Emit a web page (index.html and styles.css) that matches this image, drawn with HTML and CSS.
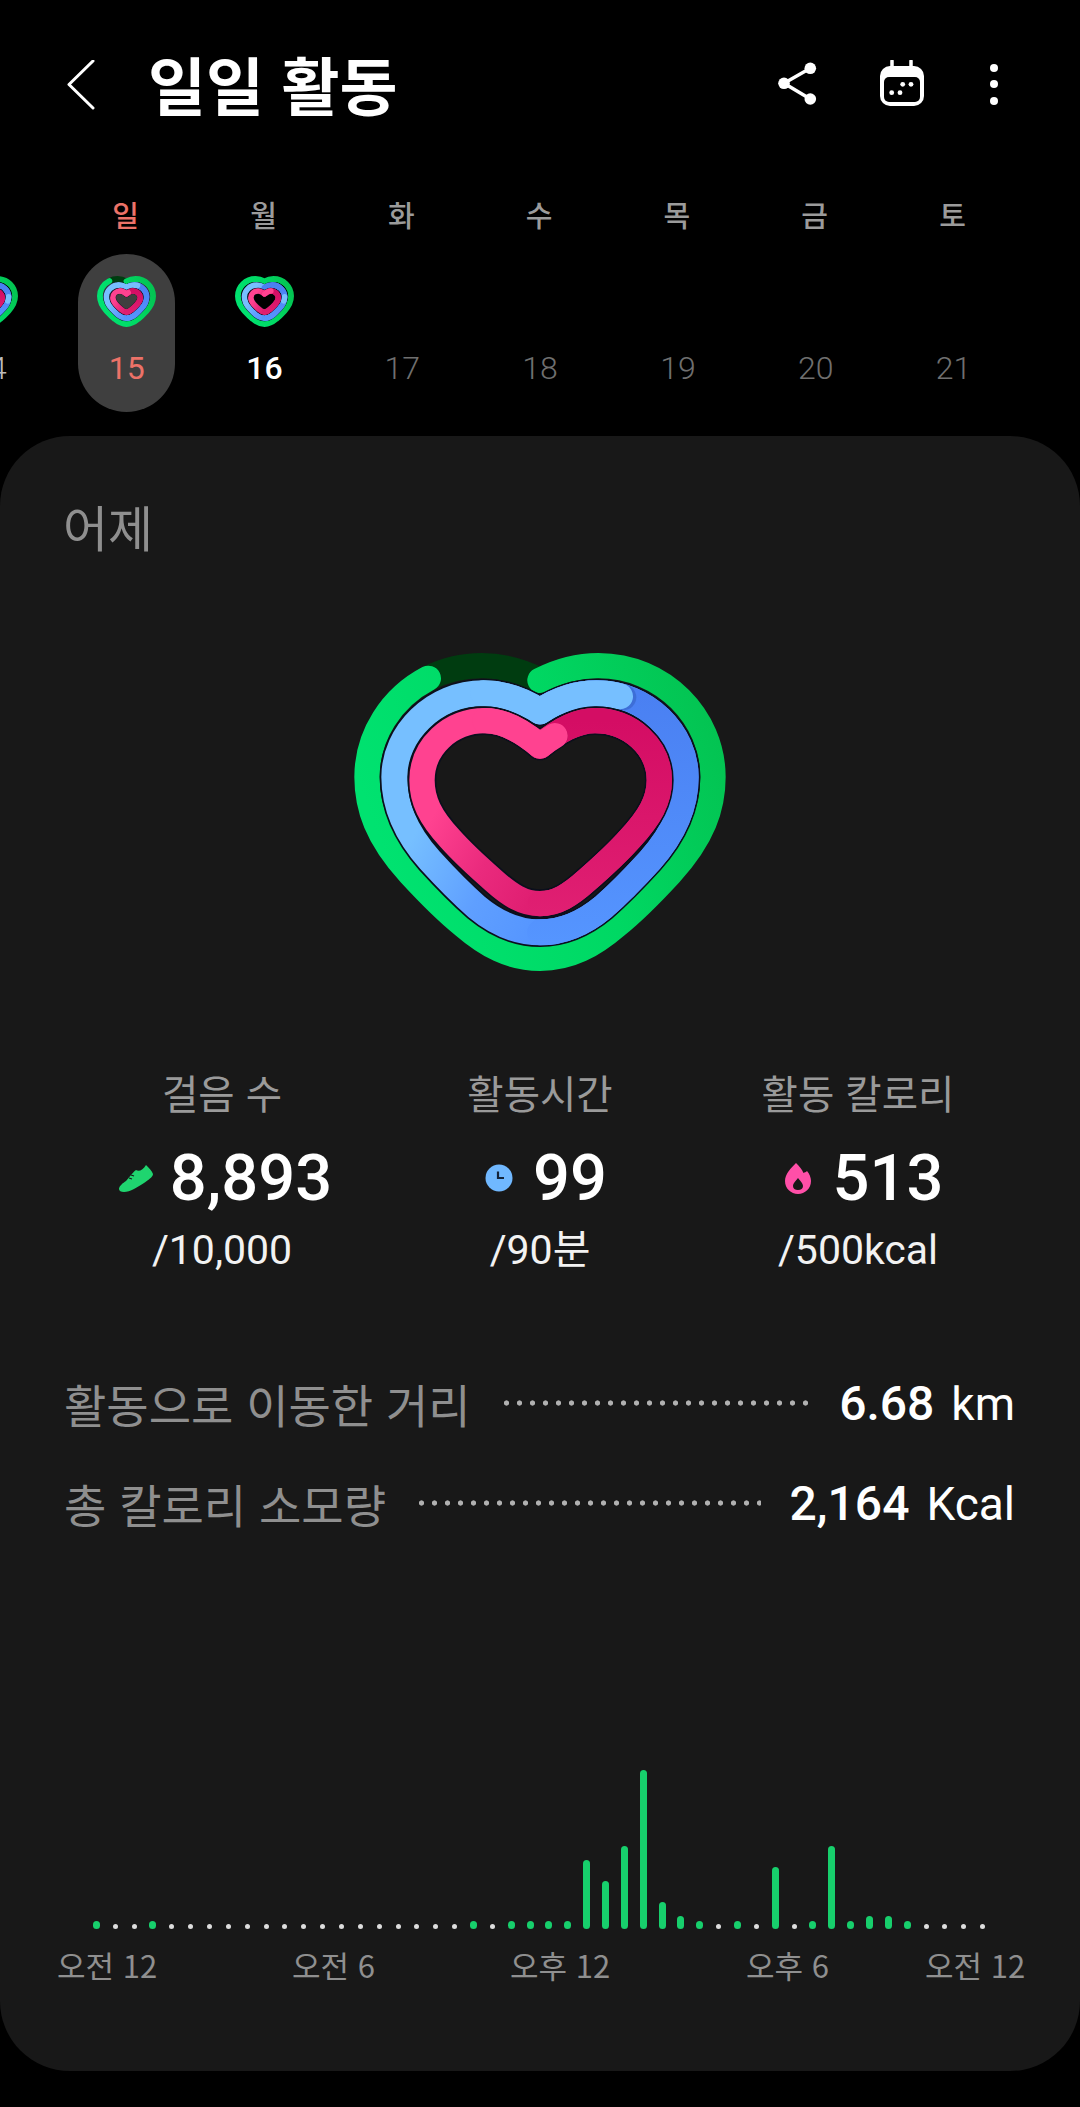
FILE: index.html
```html
<!DOCTYPE html>
<html lang="ko">
<head>
  <meta charset="UTF-8" />
  <meta name="viewport" content="width=device-width, initial-scale=1.0"/>
  <title>일일 활동</title>
  <link rel="stylesheet" href="styles.css">
</head>
<body>
  <header class="topbar">
    <svg class="back" viewBox="0 0 30 50"><path d="M27 1 3 24.500 27 48"/></svg>
    <h1>일일 활동</h1>
    <div class="actions">
      <svg class="share" viewBox="0 0 40 50">
        <path d="M33.300 8.300 7 23.300 33.300 39"/>
        <circle cx="33.300" cy="8.300" r="5.800"/><circle cx="7" cy="23.300" r="5.800"/><circle cx="33.300" cy="39" r="5.800"/>
      </svg>
      <svg class="cal" viewBox="0 0 48 50">
        <path class="cal-stub" d="M14 1v7M33 1v7"/>
        <rect x="2" y="6" width="44" height="40" rx="10" fill="#fff"/>
        <rect x="6" y="17" width="36" height="25" rx="5" fill="#000"/>
        <circle cx="24.700" cy="24.300" r="2.400"/><circle cx="33" cy="24.300" r="2.400"/>
        <circle cx="13.700" cy="32.700" r="2.400"/><circle cx="22" cy="32.700" r="2.400"/>
      </svg>
      <svg class="more" viewBox="0 0 12 50">
        <circle cx="6" cy="8" r="4"/><circle cx="6" cy="24" r="4"/><circle cx="6" cy="41" r="4"/>
      </svg>
    </div>
  </header>

  <div class="week">
    <div class="day">
      <span class="dow"></span>
      <div class="pill"><svg class="mini"><use href="#mini-done"/></svg><span class="date past">14</span></div>
    </div>
    <div class="day">
      <span class="dow sun">일</span>
      <div class="pill selected"><svg class="mini"><use href="#mini-today"/></svg><span class="date sun">15</span></div>
    </div>
    <div class="day">
      <span class="dow">월</span>
      <div class="pill"><svg class="mini"><use href="#mini-done"/></svg><span class="date today">16</span></div>
    </div>
    <div class="day"><span class="dow">화</span><div class="pill"><i class="mini"></i><span class="date">17</span></div></div>
    <div class="day"><span class="dow">수</span><div class="pill"><i class="mini"></i><span class="date">18</span></div></div>
    <div class="day"><span class="dow">목</span><div class="pill"><i class="mini"></i><span class="date">19</span></div></div>
    <div class="day"><span class="dow">금</span><div class="pill"><i class="mini"></i><span class="date">20</span></div></div>
    <div class="day"><span class="dow">토</span><div class="pill"><i class="mini"></i><span class="date">21</span></div></div>
  </div>

  <main class="card">
    <h2 class="when">어제</h2>

    <svg class="hero"><use href="#heart-today"/></svg>

    <section class="stats">
      <div class="stat">
        <span class="stat-label">걸음 수</span>
        <div class="stat-num shift-s">
          <svg class="ico-shoe" viewBox="12 22 36 29">
            <path fill="#1fd56f" d="M13 47C13 44 17 41 20 39L25 33C27 31 28 29 30 28C33 30 37 28 40 23C43 26 46 29 47 32C47 35 42 38 38 41C32 45 24 50 18 50C15 50 13 49 13 47Z"/>
            <path stroke="#171717" stroke-width="1.200" fill="none" d="M25 33l3 1M23 36l3 1"/>
          </svg>
          <b>8,893</b>
        </div>
        <span class="stat-goal">/10,000</span>
      </div>
      <div class="stat">
        <span class="stat-label">활동시간</span>
        <div class="stat-num shift-a">
          <svg class="ico-clock" viewBox="0 0 28 28">
            <circle cx="14" cy="14" r="13.500" fill="#70b8ff"/>
            <path d="M13 7.500V14H19" fill="none" stroke="#14243a" stroke-width="2.200"/>
          </svg>
          <b>99</b>
        </div>
        <span class="stat-goal">/90분</span>
      </div>
      <div class="stat">
        <span class="stat-label">활동 칼로리</span>
        <div class="stat-num shift-b">
          <svg class="ico-flame" viewBox="0 0 26 31">
            <path fill="#ff4fa8" fill-rule="evenodd" d="M11 0C14 3 17 6 18.500 10C19.500 9.500 21 9 22 8C24.500 11 26 14.500 26 18C26 25.500 20 31 13 31C6 31 0 25.500 0 18C0 11 6 5 11 0ZM13 15C15 18 18 20 18 23C18 25.500 16 27 13 27C10 27 8 25.500 8 23C8 20 11 18 13 15Z"/>
          </svg>
          <b>513</b>
        </div>
        <span class="stat-goal">/500kcal</span>
      </div>
    </section>

    <section class="totals">
      <div class="total">
        <span class="total-label">활동으로 이동한 거리</span>
        <i class="leader"></i>
        <span class="total-val"><b>6.68</b><span class="unit">km</span></span>
      </div>
      <div class="total">
        <span class="total-label">총 칼로리 소모량</span>
        <i class="leader"></i>
        <span class="total-val"><b>2,164</b><span class="unit">Kcal</span></span>
      </div>
    </section>

    <div class="chart">
      <i class="bar"></i><i class="dot"></i><i class="dot"></i><i class="bar"></i><i class="dot"></i><i class="dot"></i>
      <i class="dot"></i><i class="dot"></i><i class="dot"></i><i class="dot"></i><i class="dot"></i><i class="dot"></i>
      <i class="dot"></i><i class="dot"></i><i class="dot"></i><i class="dot"></i><i class="dot"></i><i class="dot"></i>
      <i class="dot"></i><i class="dot"></i><i class="bar"></i><i class="dot"></i><i class="bar"></i><i class="bar"></i>
      <i class="bar"></i><i class="bar"></i><i class="bar" style="height:69px"></i><i class="bar" style="height:48px"></i><i class="bar" style="height:83px"></i><i class="bar" style="height:159px"></i>
      <i class="bar" style="height:27px"></i><i class="bar" style="height:13px"></i><i class="bar"></i><i class="dot"></i><i class="bar"></i><i class="dot"></i>
      <i class="bar" style="height:62px"></i><i class="dot"></i><i class="bar"></i><i class="bar" style="height:83px"></i><i class="bar"></i><i class="bar" style="height:13px"></i>
      <i class="bar" style="height:13px"></i><i class="bar"></i><i class="dot"></i><i class="dot"></i><i class="dot"></i><i class="dot"></i>
    </div>
    <div class="axis">
      <span>오전 12</span><span>오전 6</span><span>오후 12</span><span>오후 6</span><span>오전 12</span>
    </div>
  </main>

  <svg class="sprite">
    <defs>
      <linearGradient id="g-green" gradientUnits="userSpaceOnUse" x1="1200" y1="100" x2="100" y2="500">
        <stop offset="0" stop-color="#04bf4e"/><stop offset=".5" stop-color="#00d863"/><stop offset="1" stop-color="#00e270"/>
      </linearGradient>
      <linearGradient id="g-blue" gradientUnits="userSpaceOnUse" x1="1100" y1="650" x2="350" y2="250">
        <stop offset="0" stop-color="#4b84f5"/><stop offset=".35" stop-color="#5595ff"/><stop offset=".6" stop-color="#5f9fff"/><stop offset=".9" stop-color="#76bfff"/>
      </linearGradient>
      <linearGradient id="g-blue-right" gradientUnits="userSpaceOnUse" x1="0" y1="189" x2="0" y2="940">
        <stop offset="0" stop-color="#4a80f2"/><stop offset="1" stop-color="#5595ff"/>
      </linearGradient>
      <linearGradient id="g-pink" gradientUnits="userSpaceOnUse" x1="1000" y1="560" x2="400" y2="240">
        <stop offset="0" stop-color="#d90f67"/><stop offset=".35" stop-color="#e01f72"/><stop offset=".6" stop-color="#ea2a7d"/><stop offset=".9" stop-color="#ff4290"/>
      </linearGradient>
      <linearGradient id="g-pink-right" gradientUnits="userSpaceOnUse" x1="0" y1="271" x2="0" y2="850">
        <stop offset="0" stop-color="#d40d64"/><stop offset="1" stop-color="#e01f72"/>
      </linearGradient>
      <path id="ring-g" d="M630 150C685 122 745 106 805 106C1000 106 1149 262 1149 440C1149 530 1120 620 1020 730C960 795 910 845 860 885C790 945 720 984 630 984C540 984 470 945 400 885C350 845 300 795 240 730C140 620 111 530 111 440C111 262 260 106 455 106C515 106 575 122 630 150"/>
      <path id="arc-g" d="M630 150C685 122 745 106 805 106C1000 106 1149 262 1149 440C1149 530 1120 620 1020 730C960 795 910 845 860 885C790 945 720 984 630 984C540 984 470 945 400 885C350 845 300 795 240 730C140 620 111 530 111 440C111 315 184 202 295 144"/>
      <path id="track-g" d="M295 144C342 120 397 106 455 106C515 106 575 122 630 150"/>
      <path id="ring-b" d="M630 243C680 210 740 189 800 189C950 189 1067 310 1067 440C1067 520 1040 600 960 690C910 745 860 795 820 830C760 880 700 906 630 906C560 906 500 880 440 830C400 795 350 745 300 690C220 600 193 520 193 440C193 310 310 189 460 189C520 189 580 210 630 243"/>
      <path id="right-b" d="M630 243C680 210 740 189 800 189C950 189 1067 310 1067 440C1067 520 1040 600 960 690C910 745 860 795 820 830C760 880 700 906 630 906"/>
      <path id="over-b" d="M460 189C520 189 580 210 630 243C680 210 740 189 800 189C825 189 848 192 870 198"/>
      <path id="ring-p" d="M630 347C680 305 735 271 795 271C900 271 988 350 988 450C988 510 960 560 900 625C860 670 810 715 770 750C720 795 680 820 630 820C580 820 540 795 490 750C450 715 400 670 360 625C300 560 276 510 276 450C276 350 360 271 465 271C525 271 580 305 630 347"/>
      <path id="right-p" d="M630 347C680 305 735 271 795 271C900 271 988 350 988 450C988 510 960 560 900 625C860 670 810 715 770 750C720 795 680 820 630 820"/>
      <path id="over-p" d="M465 271C525 271 580 305 630 347C645 335 660 325 675 316"/>
    </defs>

    <symbol id="heart-today" viewBox="72 68 1116 954">
      <g fill="none" stroke-linecap="round" stroke-linejoin="round">
        <use href="#track-g" stroke="#003c10" stroke-width="76"/>
        <use href="#arc-g" stroke="url(#g-green)" stroke-width="76"/>
        <use href="#ring-b" stroke="#0b0f1c" stroke-width="88"/>
        <use href="#ring-b" stroke="url(#g-blue)" stroke-width="78"/>
        <use href="#right-b" stroke="url(#g-blue-right)" stroke-width="78"/>
        <circle cx="880" cy="201" r="39" fill="#3562c4" stroke="none" opacity=".6"/>
        <use href="#over-b" stroke="#76bfff" stroke-width="78"/>
        <use href="#ring-p" stroke="#0b0f1c" stroke-width="86"/>
        <use href="#ring-p" stroke="url(#g-pink)" stroke-width="76"/>
        <use href="#right-p" stroke="url(#g-pink-right)" stroke-width="76"/>
        <circle cx="681" cy="317" r="33" fill="#a80a4f" stroke="none" opacity=".6"/>
        <use href="#over-p" stroke="#ff4290" stroke-width="76"/>
      </g>
    </symbol>

    <symbol id="mini-today" viewBox="72 68 1116 954">
      <g fill="none" stroke-linecap="round" stroke-linejoin="round">
        <g transform="translate(630 545) scale(.969) translate(-630 -545)">
          <use href="#track-g" stroke="#003c10" stroke-width="113"/>
          <use href="#arc-g" stroke="url(#g-green)" stroke-width="113"/>
        </g>
        <g transform="translate(630 545) scale(.87) translate(-630 -545)">
          <use href="#ring-b" stroke="#0b0f1c" stroke-width="138"/>
          <use href="#ring-b" stroke="url(#g-blue)" stroke-width="121"/>
          <use href="#right-b" stroke="url(#g-blue-right)" stroke-width="121"/>
          <use href="#over-b" stroke="#76bfff" stroke-width="121"/>
        </g>
        <g transform="translate(630 545) scale(.73) translate(-630 -545)">
          <use href="#ring-p" stroke="#0b0f1c" stroke-width="164"/>
          <use href="#ring-p" stroke="url(#g-pink)" stroke-width="144"/>
          <use href="#right-p" stroke="url(#g-pink-right)" stroke-width="144"/>
          <use href="#over-p" stroke="#ff4290" stroke-width="144"/>
        </g>
      </g>
    </symbol>

    <symbol id="mini-done" viewBox="72 68 1116 954">
      <g fill="none" stroke-linecap="round" stroke-linejoin="round">
        <g transform="translate(630 545) scale(.969) translate(-630 -545)">
          <use href="#ring-g" stroke="url(#g-green)" stroke-width="113"/>
        </g>
        <g transform="translate(630 545) scale(.87) translate(-630 -545)">
          <use href="#ring-b" stroke="#0b0f1c" stroke-width="138"/>
          <use href="#ring-b" stroke="url(#g-blue)" stroke-width="121"/>
          <use href="#right-b" stroke="url(#g-blue-right)" stroke-width="121"/>
          <path stroke="#76bfff" stroke-width="121" d="M1067 440C1067 470 1060 500 1050 530"/>
        </g>
        <g transform="translate(630 545) scale(.73) translate(-630 -545)">
          <use href="#ring-p" stroke="#0b0f1c" stroke-width="164"/>
          <use href="#ring-p" stroke="url(#g-pink)" stroke-width="144"/>
          <use href="#right-p" stroke="url(#g-pink-right)" stroke-width="144"/>
          <path stroke="#ff4290" stroke-width="144" d="M630 347C680 305 735 271 795 271"/>
        </g>
      </g>
    </symbol>
  </svg>
</body>
</html>
```

FILE: styles.css
```css
:root {
  --bg: #000;
  --card: #181818;
  --text: #fff;
  --muted: #8f8f8f;
  --green: #17cf6c;
  --sun: #ec7268;
}

* {
  box-sizing: border-box;
}

body {
  margin: 0;
  height: 2107px;
  overflow: hidden;
  background: var(--bg);
  color: var(--text);
  font-family: Roboto, "Noto Sans CJK KR", sans-serif;
}

i {
  display: block;
}

/* top bar */
.topbar {
  display: flex;
  align-items: center;
  height: 170px;
  padding: 0 80px 0 66px;
}

.topbar svg {
  display: block;
  height: 50px;
}

.back {
  width: 30px;
  fill: none;
  stroke: #fff;
  stroke-width: 3;
  stroke-linecap: round;
  stroke-linejoin: round;
}

h1 {
  margin: -4px 0 0 52px;
  font-family: "Noto Sans CJK KR", sans-serif;
  font-size: 63px;
  font-weight: 700;
  line-height: 70px;
}

.actions {
  display: flex;
  align-items: center;
  gap: 61px;
  margin-left: auto;
}

.share {
  width: 40px;
  fill: #fff;
}

.share path {
  fill: none;
  stroke: #fff;
  stroke-width: 3.500;
}

.cal {
  width: 48px;
  fill: #fff;
}

.cal-stub {
  stroke: #fff;
  stroke-width: 3.500;
  stroke-linecap: round;
}

.more {
  width: 12px;
  fill: #fff;
  margin-left: 1px;
}

/* week strip */
.week {
  display: flex;
  margin: 0 0 24px -80px;
  height: 242px;
}

.day {
  flex: 0 0 137.800px;
  display: flex;
  flex-direction: column;
  align-items: center;
}

.dow {
  height: 84px;
  padding-top: 24px;
  margin-left: -2px;
  font-family: "Noto Sans CJK KR", sans-serif;
  font-size: 29px;
  font-weight: 500;
  line-height: 40px;
  color: #9b9b9b;
}

.dow.sun {
  color: var(--sun);
}

.pill {
  display: flex;
  flex-direction: column;
  align-items: center;
  width: 97px;
  height: 158px;
  padding-top: 22px;
  border-radius: 49px;
}

.pill.selected {
  background: #3f3f3f;
}

.mini {
  display: block;
  width: 59px;
  height: 51px;
  flex: none;
}

.date {
  padding-top: 21px;
  font-size: 32px;
  font-weight: 300;
  line-height: 40px;
  color: #6f6f6f;
}

.date.sun {
  color: var(--sun);
  font-weight: 400;
}

.date.today {
  color: #fff;
  font-weight: 500;
}

.date.past {
  color: #bbb;
}

/* card */
.card {
  height: 1635px;
  padding-top: 63px;
  background: var(--card);
  border-radius: 70px;
}

.when {
  margin: 0 0 0 63px;
  font-family: "Noto Sans CJK KR", sans-serif;
  font-size: 49px;
  font-weight: 400;
  line-height: 53px;
  color: var(--muted);
}

.hero {
  display: block;
  width: 372px;
  height: 318px;
  margin: 101px auto 0;
}

.stats {
  display: grid;
  grid-template-columns: 316px 320px 316px;
  margin-top: 99px;
  padding-left: 64px;
}

.stat {
  display: flex;
  flex-direction: column;
  align-items: center;
}

.stat-label {
  font-family: "Noto Sans CJK KR", sans-serif;
  font-size: 39.500px;
  line-height: 44px;
  color: #9a9a9a;
}

.stat-num {
  display: flex;
  align-items: center;
  gap: 16px;
  height: 76px;
  margin-top: 26px;
  font-size: 65px;
}

.stat-num b {
  font-weight: 500;
}

.shift-s {
  margin-left: 6px;
}

.shift-a {
  gap: 20px;
  margin-left: 12px;
}

.shift-b {
  gap: 22px;
  margin-left: 12px;
}

.ico-shoe {
  width: 36px;
  height: 29px;
}

.ico-clock {
  width: 28px;
  height: 28px;
}

.ico-flame {
  width: 26px;
  height: 31px;
}

.stat-goal {
  margin-top: 10px;
  font-size: 41px;
  line-height: 48px;
  color: #f2f2f2;
}

.totals {
  display: flex;
  flex-direction: column;
  gap: 40px;
  margin-top: 99px;
  padding: 0 65px 0 64px;
}

.total {
  display: flex;
  align-items: center;
  height: 60px;
}

.total-label {
  font-family: "Noto Sans CJK KR", sans-serif;
  font-size: 46px;
  color: var(--muted);
  white-space: nowrap;
}

.leader {
  flex: 1;
  height: 6px;
  margin: 0 29px;
  background: radial-gradient(circle, #b0b0b0 2.300px, transparent 2.900px) left center / 13px 6px repeat-x;
}

.total-val {
  display: flex;
  align-items: baseline;
  font-size: 48px;
}

.total-val b {
  font-weight: 500;
}

.unit {
  margin-left: 17px;
  font-size: 46px;
}

/* hourly chart */
.chart {
  display: grid;
  grid-template-columns: repeat(48, 1fr);
  justify-items: center;
  align-items: end;
  height: 170px;
  margin-top: 226px;
  padding: 0 88px 0 87px;
}

.bar {
  width: 7px;
  height: 8px;
  border-radius: 4px;
  background: var(--green);
}

.dot {
  width: 5px;
  height: 5px;
  border-radius: 50%;
  background: #ddd;
}

.axis {
  display: grid;
  grid-template-columns: 235px 218px 236px 179px auto;
  margin-top: 16px;
  padding-left: 57px;
  font-family: "Noto Sans CJK KR", Roboto, sans-serif;
  font-size: 31px;
  line-height: 40px;
  color: #8f8f8f;
}

.sprite {
  display: block;
  width: 0;
  height: 0;
}
```
